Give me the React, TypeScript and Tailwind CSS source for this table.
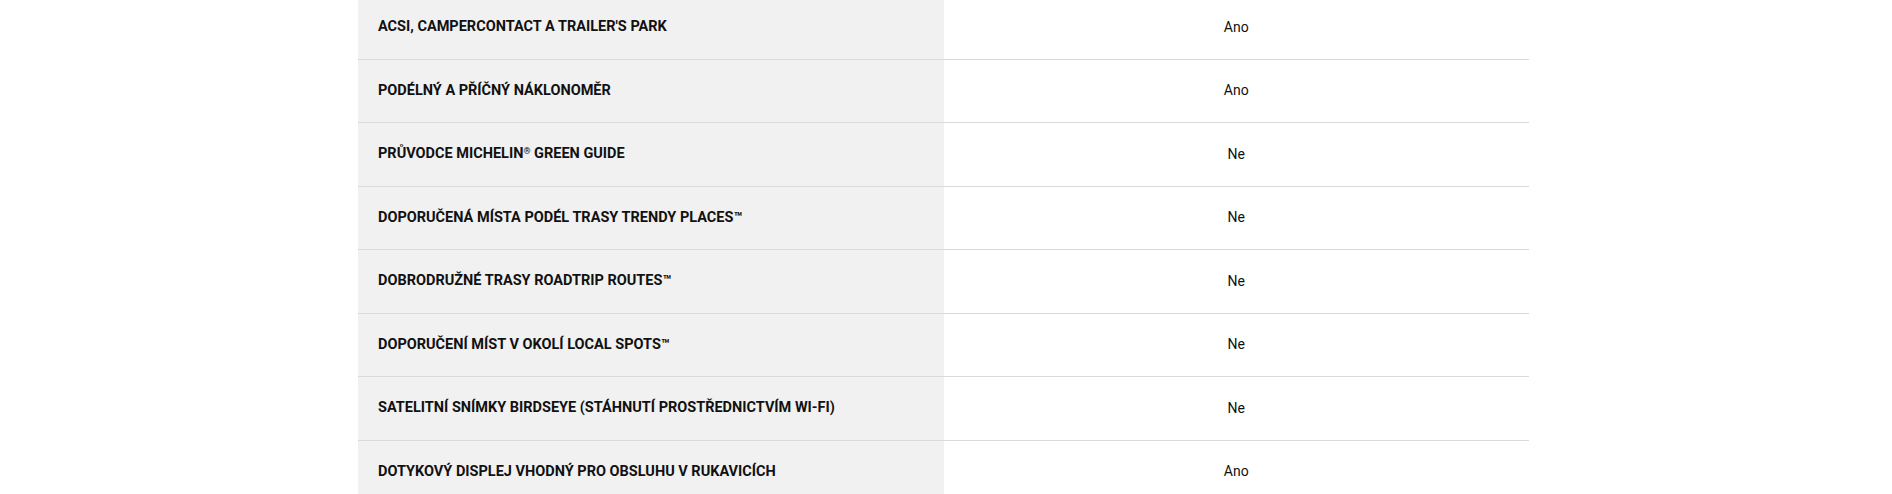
import type { ReactNode } from "react";

const ROWS: { label: ReactNode; value: string }[] = [
  { label: "ACSI, CAMPERCONTACT A TRAILER'S PARK", value: "Ano" },
  { label: "Podélný a příčný náklonoměr", value: "Ano" },
  {
    label: (
      <>
        Průvodce MICHELIN<sup className="text-[9px]">®</sup> Green Guide
      </>
    ),
    value: "Ne",
  },
  { label: "Doporučená místa podél trasy Trendy Places™", value: "Ne" },
  { label: "Dobrodružné trasy Roadtrip Routes™", value: "Ne" },
  { label: "Doporučení míst v okolí Local Spots™", value: "Ne" },
  { label: "Satelitní snímky BirdsEye (stáhnutí prostřednictvím Wi-Fi)", value: "Ne" },
  { label: "Dotykový displej vhodný pro obsluhu v rukavicích", value: "Ano" },
];

export default function App() {
  return (
    <div className="h-[494px] overflow-hidden bg-white font-['Roboto',sans-serif] text-[#111]">
      <div className="-mt-[4px] ml-[358px] w-[1171px]">
        {ROWS.map((row, i) => (
          <div key={i} className="grid h-[63.5px] grid-cols-2 border-b border-[#dadada]">
            <div className="flex items-center bg-[#f1f1f1] pl-5 text-[14.5px] font-bold uppercase">
              <span>{row.label}</span>
            </div>
            <div className="flex items-center justify-center text-[14px]">{row.value}</div>
          </div>
        ))}
      </div>
    </div>
  );
}
